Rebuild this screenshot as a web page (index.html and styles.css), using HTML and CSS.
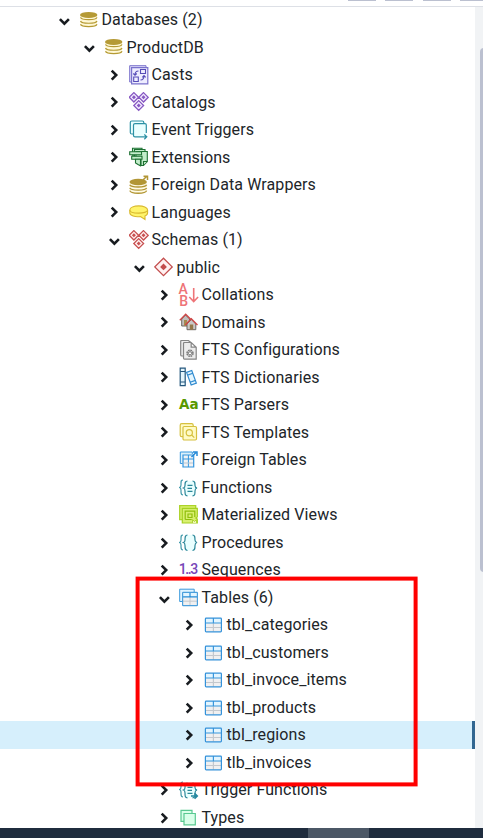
FILE: index.html
```html
<!DOCTYPE html>
<html lang="en">
<head>
<meta charset="utf-8">
<title>Object Explorer</title>
<link rel="stylesheet" href="styles.css">
</head>
<body>
<svg class="defs" aria-hidden="true">
  <symbol id="right" viewBox="0 0 13 20"><path d="M3.700 5.600 8.200 10.100 3.700 14.600" fill="none" stroke="#181c20" stroke-width="2.600"/></symbol>
  <symbol id="down" viewBox="0 0 13 20"><path d="M1.900 9.100 6.400 13.600 10.900 9.100" fill="none" stroke="#181c20" stroke-width="2.600"/></symbol>
  <symbol id="db" viewBox="0 0 20 20">
    <path d="M1.500 5v9.500c0 3.300 16.500 3.300 16.500 0V5z" fill="#fff8d5"/>
    <ellipse cx="9.700" cy="4.900" rx="8.700" ry="3" fill="#b59a35"/>
    <path d="M1.500 7.400c1 3 15.500 3 16.500 0M1.500 11c1 3 15.500 3 16.500 0M1.500 14.300c1 3.100 15.500 3.100 16.500 0" fill="none" stroke="#b59a35" stroke-width="1.200"/>
  </symbol>
  <symbol id="casts" viewBox="0 0 20 20">
    <path d="M2.500 17H.7V.7H17V2.500" fill="#dedcf8" stroke="#7a72cc"/>
    <path d="M2.600 2.600h16.200v16.200H2.600z" fill="#eeedff" stroke="#7a72cc" stroke-width="1.200"/>
    <path d="M11.500 4.500h5v4h-5zM4.700 12h4.600v4.500H4.700zM9.500 6C7 6 6 7 6 10M4.300 8.500 6 10.300l1.800-1.800M11.500 15c2.500 0 3.500-1 3.500-4.200M13.300 12.300 15 10.500l1.700 1.800" fill="none" stroke="#574db7" stroke-width="1.100"/>
  </symbol>
  <symbol id="diamonds" viewBox="0 0 20 20">
    <path d="M4.900.6 9.600 5.300 4.900 10 .2 5.300zM14.500.6l4.700 4.700-4.700 4.700-4.700-4.700zM9.700 8.600l4.900 4.900-4.900 4.900-4.900-4.900z" fill="var(--tint)" stroke="currentColor" stroke-width="1.300"/>
    <path d="M4.900 3.300 6.900 5.300 4.900 7.300 2.900 5.300zM14.500 3.300l2 2-2 2-2-2zM9.700 11.500l2 2-2 2-2-2z" fill="currentColor"/>
  </symbol>
  <symbol id="event" viewBox="0 0 20 20">
    <g fill="#eaffff" stroke="#2c91a5" stroke-width="1.200">
    <path d="M4 14H2.800Q1.300 14 1.300 12.500V2.500Q1.300 1 2.800 1h10.500q1.500 0 1.500 1.500V4"/>
    <path d="M17.300 13V5q0-1.300-1.300-1.300H6Q4.500 3.700 4.500 5v10.500q0 1.300 1.500 1.300h11.500M15.300 14.500l2.500 2.300-2.500 2.400"/></g>
  </symbol>
  <symbol id="ext" viewBox="0 0 20 20">
    <g fill="#c3edcb" stroke="#1d7032" stroke-width="1.100">
    <path d="M3.500 1.200h9.500v7H3.500z"/><path d="M5.500 2.500h10.500v8H5.500z"/>
    <path d="M7 4.500h11.300v10L14.500 18.500H12v-7H7z"/>
    <path d="M.7 4.700h11.800v3H.7zM2.700 9.300H13v3H2.700z"/><path d="M6.500 12.300h5v6.500L9 17.500l-2.500-1.500zM14.500 18v-3.500h3.500"/></g>
  </symbol>
  <symbol id="fdw" viewBox="0 0 20 20">
    <path d="M.8 7v8c0 4.500 16.800 4.500 16.800 0V7z" fill="#fffbe5"/>
    <ellipse cx="9.200" cy="7" rx="8.700" ry="3.200" fill="#b29635"/>
    <path d="M.8 9.700c1 3 15.800 3 16.800 0M.8 12.900c1 3 15.800 3 16.800 0M.8 15.600c1 3.500 15.800 3.500 16.800 0" fill="none" stroke="#b29635" stroke-width="1.400"/>
    <path d="m13 6 5-5M14.500 1.200H18.500V5" fill="none" stroke="#b29635" stroke-width="1.500"/>
  </symbol>
  <symbol id="lang" viewBox="0 0 20 20">
    <path d="M.8 8c0-5.500 17.800-5.500 17.800 0v2.800c0 1.700-1 2.600-2.600 3.100v3.600l-4.500-3C6 15.200.8 13.800.8 10.800z" fill="#fff46a" stroke="#d9b92f" stroke-width="1.100"/>
    <path d="M.8 8c0 4.200 17.800 4.200 17.800 0" fill="none" stroke="#d9b92f" stroke-width="1.100"/>
  </symbol>
  <symbol id="schema" viewBox="0 0 20 20">
    <path d="m9.500 1.200 8.700 8.700-8.700 8.700L.8 9.900z" fill="#fff1f1" stroke="#c34d4d" stroke-width="1.300"/>
    <path d="m9.500 6.500 3.400 3.400-3.400 3.400-3.400-3.400z" fill="#c34d4d"/>
  </symbol>
  <symbol id="domain" viewBox="0 0 20 20">
    <path d="M2.700 7 6.500 3l4 4v7H2.700z" fill="#c2bfbc" stroke="#6c6763"/>
    <path d="M.8 8.300 6.700 2.200l6 6" fill="none" stroke="#cf4747" stroke-width="1.300"/>
    <path d="M5 8h3v6H5z" fill="#a58a50"/>
    <path d="M8 12l4.300-4.500 4.500 4.500v5.700H8z" fill="#cbc8c6" stroke="#6c6763"/>
    <path d="m6.300 13 6-6.200 6.200 6.200" fill="none" stroke="#cf4747" stroke-width="1.300"/>
    <path d="M10.800 12.500h3.400v5.200h-3.400z" fill="#94784b"/>
  </symbol>
  <symbol id="conf" viewBox="0 0 20 20">
    <g fill="#ececec" stroke="#858585" stroke-width="1.200"><path d="M4.500 16H3Q1.700 16 1.700 15V1.500Q1.700.3 2.700.3H9l3 2.200"/><path d="M5.500 2.500h6.700L17.200 7.200v12H5.500Q4.500 19.200 4.500 18V3.500q0-1 1-1zM12.200 2.500v4.700h5"/></g>
    <circle cx="11" cy="13.300" r="3" fill="none" stroke="#777" stroke-width="1.500" stroke-dasharray="1.700 .650"/><circle cx="11" cy="13.300" r="1.600" fill="#fff" stroke="#777"/>
  </symbol>
  <symbol id="dict" viewBox="0 0 20 20">
    <path d="M1.200 1.200h5v17.500h-5z" fill="#e4f5fc" stroke="#24577d" stroke-width="1.200"/>
    <path d="M1.200 4.500h5m-5 10.500h5" stroke="#24577d" stroke-width="1.200"/>
    <g transform="rotate(-20 12.500 11)" fill="#e4f6ff" stroke="#318bd0" stroke-width="1.200"><path d="M9.800 4h5.500v13.500H9.800zM9.800 7h5.500m-5.500 7.500h5.500"/></g>
  </symbol>
  <symbol id="templ" viewBox="0 0 20 20">
    <g fill="#fffbc5" stroke="#d6c03e" stroke-width="1.200"><rect x="1.200" y="1.700" width="13" height="13" rx="1.500"/><rect x="4" y="4.500" width="13.500" height="13.500" rx="1.200"/><circle cx="10.300" cy="10.700" r="3.100"/><path d="m12.700 13 2.600 2.600"/></g>
  </symbol>
  <symbol id="ftable" viewBox="0 0 20 20">
    <path d="M3.500 13.500H1.300V2h12v2" fill="#dcf0fb" stroke="#3596de"/>
    <path d="M4 5h10.700v12H4z" fill="#f1f3f5" stroke="#3596de" stroke-width="1.200"/>
    <path d="M4 9h11M9.400 5v12" stroke="#3596de"/><path d="M4.700 13H14" stroke="#b7c4cf"/>
    <path d="m12.500 7 5-5M14 2h4v4" fill="none" stroke="#278bd8" stroke-width="1.500"/>
  </symbol>
  <symbol id="func" viewBox="0 0 20 20">
    <path d="M4 2C2 2 2 3 2 5v2q0 2-1.500 2.500Q2 10 2 12v2c0 2 0 3 2 3" fill="none" stroke="#419aaa" stroke-width="1.200"/>
    <path d="M8.500 3C6 3 6 5 6 7.500q0 2-1.500 2.500Q6 10.500 6 13c0 3 0 4.800 2.500 4.800h5C16 17.800 16 16 16 13q0-2.500 2-3-2-.5-2-2.500C16 5 16 3 13.500 3" fill="#e9ffff"/>
    <path d="M8.500 3C6 3 6 5 6 7.500q0 2-1.500 2.500Q6 10.500 6 13c0 3 0 4.800 2.500 4.800m5 0C16 17.800 16 16 16 13q0-2.500 2-3-2-.5-2-2.500C16 5 16 3 13.500 3M8.500 7.300h5m-5 3H13m-4.500 3h5" fill="none" stroke="#2c8799" stroke-width="1.200"/>
  </symbol>
  <symbol id="mview" viewBox="0 0 20 20">
    <path d="M.7.7h16v14h-16z" fill="#daf06d" stroke="#acd329" stroke-width="1.300"/>
    <path d="M3.300 3.300h15V12l-1.500 1 1.500 1v4H3.300z" fill="#d8ef70" stroke="#a5d023" stroke-width="1.200"/>
    <path d="M6.200 14.500V6.200h9.600V12M6.200 14.500h6.500M9 9h4v3.500H9z" fill="none" stroke="#8fbe0a" stroke-width="1.200"/>
    <path d="M13.500 18v-3.500l2 2 2-2V18" fill="#eef7b6" stroke="#afd334"/>
  </symbol>
  <symbol id="proc" viewBox="0 0 20 20">
    <path d="M4 2C2 2 2 3 2 5v2q0 2-1.500 2.500Q2 10 2 12v2c0 2 0 3 2 3" fill="none" stroke="#419aaa" stroke-width="1.200"/>
    <path d="M8.500 2C6 2 6 4 6 7q0 2-1.500 2.500Q6 10 6 12.500c0 3 0 5 2.500 5h5c2.500 0 2.500-2 2.500-5q0-2.500 2-3Q16 9 16 7c0-3 0-5-2.500-5" fill="#e9ffff"/>
    <path d="M8.500 2C6 2 6 4 6 7q0 2-1.500 2.500Q6 10 6 12.500c0 3 0 5 2.500 5m5 0c2.500 0 2.500-2 2.500-5q0-2.500 2-3Q16 9 16 7c0-3 0-5-2.500-5" fill="none" stroke="#2c8799" stroke-width="1.200"/>
  </symbol>
  <symbol id="tables" viewBox="0 0 20 20">
    <path d="M3.500 13.500H.7V1.200h14.500V4" fill="#dff3ff" stroke="#3b99dd"/>
    <rect x="3.600" y="4.300" width="14.800" height="13.400" rx=".7" fill="#f0f0f1"/>
    <path d="M3.600 4.300h14.800v4.500H3.600z" fill="#e3f5ff"/><path d="M4 13.200h14M11 9v8.500" stroke="#c4c8cd"/>
    <path d="M3.600 8.800h14.800M11 4.300v4.500" stroke="#248bd6" stroke-width="1.200"/>
    <rect x="3.600" y="4.300" width="14.800" height="13.400" rx=".7" fill="none" stroke="#4b9fdc" stroke-width="1.200"/>
  </symbol>
  <symbol id="table" viewBox="0 0 20 20">
    <path d="M1.400 3.100h16v13.800h-16z" fill="#f0f0f1"/><path d="M1.400 3.100h16v5h-16z" fill="#e3f5ff"/>
    <path d="M2 12.500h15M9.400 8v8.500" stroke="#c4c8cd" stroke-width="1.200"/>
    <path d="M1.500 8h15.500M9.400 3v5" stroke="#3a97dc" stroke-width="1.200"/>
    <rect x="1.400" y="3.100" width="16" height="13.800" rx=".8" fill="none" stroke="#3492da" stroke-width="1.200"/>
  </symbol>
  <symbol id="trig" viewBox="0 0 20 20"><use href="#func"/><path d="M12 16h6m-2.500-2.700L18.200 16l-2.700 2.700" fill="none" stroke="#2588a0" stroke-width="1.700"/></symbol>
  <symbol id="types" viewBox="0 0 20 20"><g fill="#d9ffe9" stroke="#59c991" stroke-width="1.200"><path d="M2 2.300h11v11H2z"/><path d="M5 5.500h11.300v11.300H5z"/></g></symbol>
</svg>
<div class="window">
  <div class="toolbar"><i></i><i></i><i></i><i></i></div>
  <div class="panel">
    <div class="tree">
      <div class="row l0"><svg class="arrow"><use href="#down"/></svg><svg class="icon"><use href="#db"/></svg><span>Databases (2)</span></div>
      <div class="row l1"><svg class="arrow"><use href="#down"/></svg><svg class="icon"><use href="#db"/></svg><span>ProductDB</span></div>
      <div class="row l2"><svg class="arrow"><use href="#right"/></svg><svg class="icon"><use href="#casts"/></svg><span>Casts</span></div>
      <div class="row l2"><svg class="arrow"><use href="#right"/></svg><svg class="icon purple"><use href="#diamonds"/></svg><span>Catalogs</span></div>
      <div class="row l2"><svg class="arrow"><use href="#right"/></svg><svg class="icon"><use href="#event"/></svg><span>Event Triggers</span></div>
      <div class="row l2"><svg class="arrow"><use href="#right"/></svg><svg class="icon"><use href="#ext"/></svg><span>Extensions</span></div>
      <div class="row l2"><svg class="arrow"><use href="#right"/></svg><svg class="icon"><use href="#fdw"/></svg><span>Foreign Data Wrappers</span></div>
      <div class="row l2"><svg class="arrow"><use href="#right"/></svg><svg class="icon"><use href="#lang"/></svg><span>Languages</span></div>
      <div class="row l2"><svg class="arrow"><use href="#down"/></svg><svg class="icon red"><use href="#diamonds"/></svg><span>Schemas (1)</span></div>
      <div class="row l3"><svg class="arrow"><use href="#down"/></svg><svg class="icon"><use href="#schema"/></svg><span>public</span></div>
      <div class="row l4"><svg class="arrow"><use href="#right"/></svg><svg class="icon tall" viewBox="0 0 20 24"><text x="-.500" y="11" class="coll">A</text><text x=".300" y="22.500" class="coll">B</text><path d="M14.700 5v13.500M10.300 14l4.400 4.500 4.400-4.500" fill="none" stroke="#ee7478" stroke-width="1.600"/></svg><span>Collations</span></div>
      <div class="row l4"><svg class="arrow"><use href="#right"/></svg><svg class="icon"><use href="#domain"/></svg><span>Domains</span></div>
      <div class="row l4"><svg class="arrow"><use href="#right"/></svg><svg class="icon"><use href="#conf"/></svg><span>FTS Configurations</span></div>
      <div class="row l4"><svg class="arrow"><use href="#right"/></svg><svg class="icon"><use href="#dict"/></svg><span>FTS Dictionaries</span></div>
      <div class="row l4"><svg class="arrow"><use href="#right"/></svg><svg class="icon" viewBox="0 0 20 20"><text x="0" y="14.200" class="parser">Aa</text></svg><span>FTS Parsers</span></div>
      <div class="row l4"><svg class="arrow"><use href="#right"/></svg><svg class="icon"><use href="#templ"/></svg><span>FTS Templates</span></div>
      <div class="row l4"><svg class="arrow"><use href="#right"/></svg><svg class="icon"><use href="#ftable"/></svg><span>Foreign Tables</span></div>
      <div class="row l4"><svg class="arrow"><use href="#right"/></svg><svg class="icon"><use href="#func"/></svg><span>Functions</span></div>
      <div class="row l4"><svg class="arrow"><use href="#right"/></svg><svg class="icon"><use href="#mview"/></svg><span>Materialized Views</span></div>
      <div class="row l4"><svg class="arrow"><use href="#right"/></svg><svg class="icon"><use href="#proc"/></svg><span>Procedures</span></div>
      <div class="row l4"><svg class="arrow"><use href="#right"/></svg><svg class="icon" viewBox="0 0 20 20"><text x="-.300" y="14" class="seq" textLength="19.500">1..3</text></svg><span>Sequences</span></div>
      <div class="row l4"><svg class="arrow"><use href="#down"/></svg><svg class="icon"><use href="#tables"/></svg><span>Tables (6)</span></div>
      <div class="row l5"><svg class="arrow"><use href="#right"/></svg><svg class="icon"><use href="#table"/></svg><span>tbl_categories</span></div>
      <div class="row l5"><svg class="arrow"><use href="#right"/></svg><svg class="icon"><use href="#table"/></svg><span>tbl_customers</span></div>
      <div class="row l5"><svg class="arrow"><use href="#right"/></svg><svg class="icon"><use href="#table"/></svg><span>tbl_invoce_items</span></div>
      <div class="row l5"><svg class="arrow"><use href="#right"/></svg><svg class="icon"><use href="#table"/></svg><span>tbl_products</span></div>
      <div class="row l5 selected"><svg class="arrow"><use href="#right"/></svg><svg class="icon"><use href="#table"/></svg><span>tbl_regions</span></div>
      <div class="row l5"><svg class="arrow"><use href="#right"/></svg><svg class="icon"><use href="#table"/></svg><span>tlb_invoices</span></div>
      <div class="row l4"><svg class="arrow"><use href="#right"/></svg><svg class="icon"><use href="#trig"/></svg><span>Trigger Functions</span></div>
      <div class="row l4"><svg class="arrow"><use href="#right"/></svg><svg class="icon"><use href="#types"/></svg><span>Types</span></div>
    </div>
    <div class="scrollbar"><div class="thumb"></div></div>
  </div>
  <div class="taskbar"><div class="task"></div></div>
  <svg class="highlight" viewBox="0 0 284 212"><rect x="2.600" y="2.600" width="278" height="205.800" fill="none" stroke="#f00" stroke-width="4"/></svg>
</div>
</body>
</html>
```
FILE: styles.css
```css
* { box-sizing: border-box; }
body { margin: 0; background: #fff; color: #212529; font: 16px/27.5px Roboto, sans-serif; }
.defs { position: absolute; width: 0; height: 0; }
.window { position: relative; width: 483px; height: 838px; overflow: hidden; display: flex; flex-direction: column; }
.toolbar { flex: none; height: 7px; border-bottom: 1px solid #dde0e6; display: flex; gap: 9.5px; padding-left: 347.5px; overflow: hidden; }
.toolbar i { flex: none; width: 28px; height: 1px; background: #bbc0d0; }
.panel { flex: none; height: 821px; display: flex; overflow: hidden; }
.tree { width: 475px; margin-top: -1px; }
.row { height: 27.517px; display: flex; align-items: center; white-space: nowrap; }
.row span { margin-left: 2.5px; letter-spacing: .1px; }
.l0 { padding-left: 58px; }
.l1 { padding-left: 83px; }
.l2 { padding-left: 108px; }
.l3 { padding-left: 133px; }
.l4 { padding-left: 158px; }
.l5 { padding-left: 183px; }
.selected { background: #d6effc; border-right: 3px solid #326690; }
.arrow { flex: none; width: 13px; height: 20px; margin-right: 8px; }
.icon { flex: none; width: 20px; height: 20px; overflow: visible; }
.tall { height: 24px; }
.purple { color: #8758c2; --tint: #f2eaff; }
.red { color: #c75050; --tint: #fff0f0; }
.coll { font: 500 14px Roboto, sans-serif; fill: #ee7478; }
.parser { font: 700 13.5px "DejaVu Sans", sans-serif; fill: #599900; }
.seq { font: 500 14px Roboto, sans-serif; fill: #7746b8; }
.scrollbar { width: 8px; background: #f1f3f5; padding: 41px 0 0 5px; overflow: hidden; }
.thumb { width: 8px; height: 524px; background: #bbc0d0; border-radius: 4px; }
.taskbar { flex: none; height: 10px; background: #1f2c3e; padding-left: 308px; }
.task { width: 61px; height: 10px; background: #4b5766; }
.highlight { position: absolute; left: 135px; top: 576px; width: 284px; height: 212px; }
```
